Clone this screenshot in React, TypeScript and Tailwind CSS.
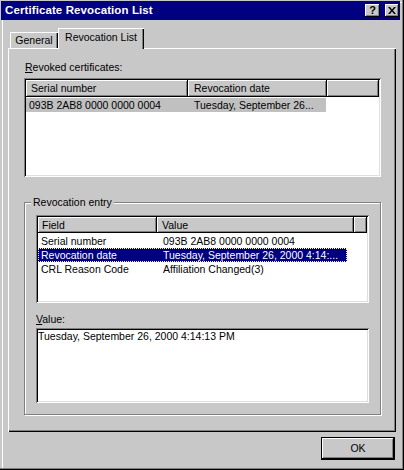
import React from "react";

const raised =
  "shadow-[inset_-1px_-1px_#000,inset_1px_1px_#fff,inset_-2px_-2px_#808080]";
const sunken =
  "shadow-[inset_1px_1px_#808080,inset_-1px_-1px_#fff,inset_2px_2px_#000,inset_-2px_-2px_#dfdfdf]";

function HeaderCell({ w, pl, children }: { w?: string; pl?: string; children?: React.ReactNode }) {
  return (
    <div
      className={`${w ?? "flex-1"} ${pl ?? "pl-[5px]"} h-full flex items-center bg-[#c8c8c8] ${raised} whitespace-nowrap overflow-hidden`}
    >
      {children}
    </div>
  );
}

export default function App() {
  return (
    <div className="w-[404px] h-[470px] bg-[#c8c8c8] font-['Liberation_Sans',Arial,sans-serif] text-[10.5px] leading-[13px] text-black pt-[1px] pl-[1px] pr-[4px] shadow-[inset_-1px_-1px_#000,inset_-2px_-2px_#808080,inset_2px_2px_#c8c8c8,inset_3px_3px_#fff] overflow-hidden">
      {/* Title bar */}
      <div className="h-[19px] bg-[#000080] flex items-center justify-between pl-[4px] pr-[1px]">
        <span className="text-white font-bold text-[11.5px] leading-[19px] tracking-[0.1px]">
          Certificate Revocation List
        </span>
        <div className="flex items-center gap-[5px]">
          <div className={`w-[15px] h-[13px] bg-[#c8c8c8] ${raised} flex items-center justify-center text-[11px] font-bold leading-none pb-[1px]`}>
            ?
          </div>
          <div className={`w-[14px] h-[13px] bg-[#c8c8c8] ${raised} flex items-center justify-center`}>
            <svg width="8" height="7" viewBox="0 0 8 7">
              <path d="M0 0h2l2 2.5L6 0h2L5 3.5 8 7H6L4 4.5 2 7H0l3-3.5z" fill="#000" />
            </svg>
          </div>
        </div>
      </div>

      {/* Tabs */}
      <div className="mt-[8px] ml-[7px] flex items-end h-[20px]">
        <div className="ml-[2px] w-[48px] h-[16px] bg-[#c8c8c8] shadow-[inset_1px_1px_#fff,inset_-1px_0_#000,inset_-2px_0_#808080] flex items-center justify-center pt-[1px]">
          General
        </div>
        <div className="relative z-10 -mb-px w-[86px] h-[21px] bg-[#c8c8c8] shadow-[inset_1px_1px_#fff,inset_-1px_0_#000,inset_-2px_0_#808080] flex items-center justify-center pb-[2px]">
          Revocation List
        </div>
      </div>

      {/* Panel */}
      <div className="ml-[7px] w-[388px] h-[384px] shadow-[inset_1px_1px_#fff,inset_-1px_-1px_#000,inset_-2px_-2px_#808080] pl-[16px] pt-[13px]">
        <div className="ml-[1px]">
          <span className="underline">R</span>evoked certificates:
        </div>
        {/* list 1 */}
        <div className={`mt-[4px] w-[357px] h-[99px] bg-white ${sunken} p-[2px]`}>
          <div className="flex h-[17px]">
            <HeaderCell w="w-[162px]">Serial number</HeaderCell>
            <HeaderCell w="w-[139px]" pl="pl-[6px]">Revocation date</HeaderCell>
            <HeaderCell />
          </div>
          <div className="mt-[1px] flex h-[14px] items-center bg-[#c0c0c0] w-[300px]">
            <div className="w-[162px] pl-[3px] whitespace-nowrap">093B 2AB8 0000 0000 0004</div>
            <div className="pl-[6px] whitespace-nowrap">Tuesday, September 26...</div>
          </div>
        </div>

        {/* group box */}
        <div className="relative mt-[25px] w-[357px] h-[213px] border border-[#808080] shadow-[inset_1px_1px_#fff,1px_1px_#fff] pl-[11px] pt-[12px]">
          <div className="absolute -top-[7px] left-[6px] px-[2px] bg-[#c8c8c8]">Revocation entry</div>
          <div className={`w-[333px] h-[88px] bg-white ${sunken} p-[2px]`}>
            <div className="flex h-[16px]">
              <HeaderCell w="w-[119px]" pl="pl-[4px]">Field</HeaderCell>
              <HeaderCell w="w-[197px]" pl="pl-[5px]">Value</HeaderCell>
              <HeaderCell />
            </div>
            <div className="pt-[1px]">
              <div className="flex h-[14px] items-center w-[309px]">
                <div className="w-[119px] pl-[3px] whitespace-nowrap">Serial number</div>
                <div className="pl-[6px] whitespace-nowrap">093B 2AB8 0000 0000 0004</div>
              </div>
              <div className="flex h-[14px] items-center w-[309px] bg-[#000080] text-white outline outline-1 outline-dotted outline-[#ffff80] -outline-offset-1">
                <div className="w-[119px] pl-[3px] whitespace-nowrap">Revocation date</div>
                <div className="pl-[6px] whitespace-nowrap">Tuesday, September 26, 2000 4:14:...</div>
              </div>
              <div className="flex h-[14px] items-center w-[309px]">
                <div className="w-[119px] pl-[3px] whitespace-nowrap">CRL Reason Code</div>
                <div className="pl-[6px] whitespace-nowrap">Affiliation Changed(3)</div>
              </div>
            </div>
          </div>
          <div className="mt-[10px]">
            <span className="underline">V</span>alue:
          </div>
          <div className={`mt-[2px] w-[333px] h-[75px] bg-white ${sunken} p-[2px] whitespace-nowrap`}>
            Tuesday, September 26, 2000 4:14:13 PM
          </div>
        </div>
      </div>

      {/* OK button */}
      <div className="mt-[5px] ml-[320px] w-[74px] h-[23px] border border-black">
        <div className={`w-full h-full bg-[#c8c8c8] ${raised} flex items-center justify-center`}>OK</div>
      </div>
    </div>
  );
}
